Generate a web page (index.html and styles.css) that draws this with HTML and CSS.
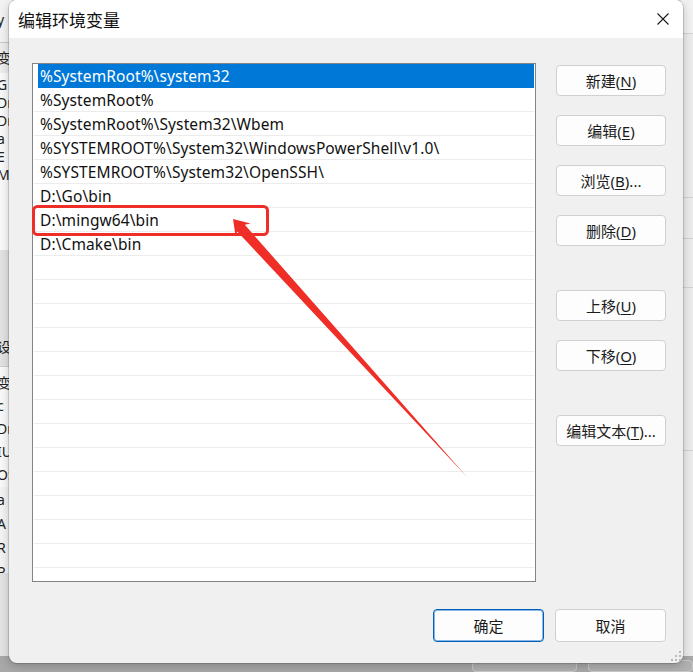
FILE: index.html
```html
<!DOCTYPE html>
<html lang="zh-CN">
<head>
<meta charset="utf-8">
<title>编辑环境变量</title>
<link rel="stylesheet" href="styles.css">
</head>
<body>
<div class="desk">
  <div class="bgwin">
    <div class="bg-row">
      <div class="bg-left">
        <div class="bg-top"><span class="frag">y |</span></div>
        <div class="bg-sec"><span class="frag">变</span></div>
        <div class="bg-list">
          <span class="frag">G</span><span class="frag">Dr</span><span class="frag">Dr</span><span class="frag">a</span><span class="frag">E</span><span class="frag">M</span>
        </div>
        <div class="bg-gap"><span class="frag">设</span></div>
        <div class="bg-list2">
          <span class="frag">变</span><span class="frag">c</span><span class="frag">Dr</span><span class="frag">IU</span><span class="frag">OS</span>
        </div>
        <div class="bg-list3">
          <span class="frag">a</span><span class="frag">A</span><span class="frag">R</span><span class="frag">P</span>
        </div>
        <div class="bg-rest"></div>
      </div>
      <div class="bg-mid"></div>
      <div class="bg-right">
        <div class="br-a"></div>
        <div class="br-b"></div>
        <div class="br-c"></div>
        <div class="br-d"></div>
        <div class="br-e"></div>
        <div class="br-f"></div>
      </div>
    </div>
    <div class="bg-bottom">
      <div class="bg-btn"></div>
      <div class="bg-btn"></div>
    </div>
  </div>

  <div class="dialog">
    <div class="titlebar">
      <div class="title">编辑环境变量</div>
      <div class="close">
        <svg width="12" height="12" viewBox="0 0 12 12"><path d="M0.5 0.5 L11.5 11.5 M11.5 0.5 L0.5 11.5" stroke="#1a1a1a" stroke-width="1.1" fill="none"/></svg>
      </div>
    </div>
    <div class="content">
      <div class="main">
        <div class="list">
          <div class="row sel"><div class="cell">%SystemRoot%\system32</div></div>
          <div class="row"><div class="cell">%SystemRoot%</div></div>
          <div class="row"><div class="cell">%SystemRoot%\System32\Wbem</div></div>
          <div class="row"><div class="cell">%SYSTEMROOT%\System32\WindowsPowerShell\v1.0\</div></div>
          <div class="row"><div class="cell">%SYSTEMROOT%\System32\OpenSSH\</div></div>
          <div class="row"><div class="cell">D:\Go\bin</div></div>
          <div class="row"><div class="cell">D:\mingw64\bin</div></div>
          <div class="row"><div class="cell">D:\Cmake\bin</div></div>
          <div class="row"><div class="cell"></div></div>
          <div class="row"><div class="cell"></div></div>
          <div class="row"><div class="cell"></div></div>
          <div class="row"><div class="cell"></div></div>
          <div class="row"><div class="cell"></div></div>
          <div class="row"><div class="cell"></div></div>
          <div class="row"><div class="cell"></div></div>
          <div class="row"><div class="cell"></div></div>
          <div class="row"><div class="cell"></div></div>
          <div class="row"><div class="cell"></div></div>
          <div class="row"><div class="cell"></div></div>
          <div class="row"><div class="cell"></div></div>
          <div class="row"><div class="cell"></div></div>
          <div class="row"><div class="cell"></div></div>
        </div>
        <div class="side">
          <div class="btn">新建(<u>N</u>)</div>
          <div class="btn gap-s">编辑(<u>E</u>)</div>
          <div class="btn gap-s">浏览(<u>B</u>)...</div>
          <div class="btn gap-s">删除(<u>D</u>)</div>
          <div class="btn gap-l">上移(<u>U</u>)</div>
          <div class="btn gap-s">下移(<u>O</u>)</div>
          <div class="btn gap-l">编辑文本(<u>T</u>)...</div>
        </div>
      </div>
      <div class="footer">
        <div class="btn wide primary">确定</div>
        <div class="btn wide">取消</div>
      </div>
    </div>
    <svg class="grip" width="12" height="12" viewBox="0 0 12 12">
      <rect x="9" y="1" width="2" height="2" fill="#b9b9b9"/>
      <rect x="5" y="5" width="2" height="2" fill="#b9b9b9"/>
      <rect x="9" y="5" width="2" height="2" fill="#b9b9b9"/>
      <rect x="1" y="9" width="2" height="2" fill="#b9b9b9"/>
      <rect x="5" y="9" width="2" height="2" fill="#b9b9b9"/>
      <rect x="9" y="9" width="2" height="2" fill="#b9b9b9"/>
    </svg>
  </div>

  <svg class="annot" width="693" height="672" viewBox="0 0 693 672">
    <rect x="33.5" y="206.5" width="234" height="28" rx="4" ry="4" fill="none" stroke="#ef2f27" stroke-width="3"/>
    <polygon points="233,219 250.5,223.4 244.8,224.8 467,477 237.2,231.5 235.7,236.8" fill="#ef2f27"/>
  </svg>
</div>
</body>
</html>
```
FILE: styles.css
```css
html, body {
  margin: 0;
  padding: 0;
}

body {
  width: 693px;
  height: 672px;
  overflow: hidden;
  font-family: "Noto Sans", "Noto Sans CJK SC", sans-serif;
}

.desk {
  position: relative;
  width: 693px;
  height: 672px;
  overflow: hidden;
  background: #e6e6e6;
}

/* background window (behind the dialog) */
.bgwin {
  position: absolute;
  left: 0;
  top: 0;
  width: 693px;
  height: 672px;
  display: flex;
  flex-direction: column;
}

.bg-row {
  height: 663px;
  display: flex;
}

.bg-left {
  width: 12px;
  display: flex;
  flex-direction: column;
  font-family: "Noto Sans", "Noto Sans CJK SC", sans-serif;
  font-size: 14px;
  color: #222;
  overflow: hidden;
}

.frag {
  display: block;
  white-space: nowrap;
  margin-left: -3px;
}

.bg-top {
  height: 43px;
  background: #f2f2f2;
  border-bottom: 1px solid #c8c8c8;
  box-sizing: border-box;
  padding-top: 12px;
  line-height: 16px;
}

.bg-sec {
  height: 30px;
  background: #ececec;
  line-height: 30px;
  padding-top: 0;
}

.bg-list {
  height: 177px;
  background: #f9f9f9;
  line-height: 18px;
  padding-top: 3px;
  box-sizing: border-box;
}

.bg-gap {
  height: 117px;
  background: #e2e2e2;
  box-sizing: border-box;
  padding-top: 88px;
  line-height: 18px;
  border-bottom: 1px solid #cfcfcf;
}

.bg-list2 {
  height: 120px;
  background: #f9f9f9;
  line-height: 23px;
  padding-top: 4px;
  box-sizing: border-box;
}

.bg-list3 {
  height: 86px;
  background: #f3f3f3;
  line-height: 24px;
  padding-top: 1px;
  box-sizing: border-box;
}

.bg-rest {
  flex: 1;
  background: #e3e3e3;
}

.bg-mid {
  flex: 1;
  background: #e6e6e6;
}

.bg-right {
  width: 12px;
  display: flex;
  flex-direction: column;
  background: #ebebeb;
}

.br-a { height: 33px; background: #f1f1f1; border-bottom: 1px solid #d2d2d2; }
.br-b { height: 163px; border-bottom: 1px solid #d2d2d2; }
.br-c { height: 40px; border-bottom: 1px solid #d2d2d2; }
.br-d { height: 48px; border-bottom: 1px solid #d2d2d2; }
.br-e { height: 162px; border-bottom: 1px solid #d2d2d2; }
.br-f { flex: 1; }

.bg-bottom {
  flex: 1;
  background: #a8a8a8;
  display: flex;
  gap: 11px;
  padding-left: 472px;
  padding-top: 4px;
}

.bg-btn {
  width: 110px;
  height: 12px;
  box-sizing: border-box;
  border: 1px solid #c9c9c9;
  border-radius: 4px;
  background: #b1b1b1;
}

/* dialog window */
.dialog {
  position: absolute;
  left: 9px;
  top: 0;
  width: 674px;
  height: 663px;
  background: #f0f0f0;
  border-radius: 8px;
  overflow: hidden;
  display: flex;
  flex-direction: column;
  box-shadow: 0 0 0 1px rgba(0, 0, 0, 0.14), 0 3px 10px rgba(0, 0, 0, 0.22);
}

.titlebar {
  height: 38px;
  flex: none;
  background: #ffffff;
  display: flex;
  align-items: center;
  justify-content: space-between;
  padding-left: 9px;
}

.title {
  font-family: "Noto Sans CJK SC", sans-serif;
  font-size: 17px;
  color: #111;
  line-height: 20px;
  padding-top: 1px;
}

.close {
  width: 40px;
  height: 38px;
  display: flex;
  align-items: center;
  justify-content: center;
}

.content {
  flex: 1;
  padding: 25px 17px 0 23px;
  display: flex;
  flex-direction: column;
}

.main {
  display: flex;
  gap: 20px;
}

.list {
  width: 504px;
  height: 519px;
  box-sizing: border-box;
  border: 1px solid #838383;
  background: #ffffff;
  padding: 0 1px;
  overflow: hidden;
}

.row {
  height: 24px;
  box-sizing: border-box;
  border-bottom: 1px solid #ececec;
}

.row.sel {
  border-bottom-color: transparent;
}

.cell {
  height: 24px;
  margin-left: 4px;
  padding-left: 2px;
  font-family: "Noto Sans", "Noto Sans CJK SC", sans-serif;
  font-size: 15.5px;
  letter-spacing: 0.1px;
  line-height: 24px;
  color: #111;
  white-space: nowrap;
}

.row.sel .cell {
  background: #0078d7;
  color: #ffffff;
}

.side {
  width: 110px;
  display: flex;
  flex-direction: column;
  padding-top: 2px;
}

.btn {
  height: 31px;
  box-sizing: border-box;
  border: 1px solid #d0d0d0;
  border-radius: 4px;
  background: #fdfdfd;
  display: flex;
  align-items: center;
  justify-content: center;
  font-family: "Noto Sans", "Noto Sans CJK SC", sans-serif;
  font-size: 15px;
  color: #1b1b1b;
  white-space: nowrap;
}

.btn u {
  text-underline-offset: 2px;
  text-decoration-thickness: 1px;
}

.gap-s { margin-top: 19px; }
.gap-l { margin-top: 44px; }

.footer {
  display: flex;
  justify-content: flex-end;
  gap: 11px;
  margin-top: 27px;
}

.btn.wide {
  width: 111px;
  height: 33px;
}

.btn.primary {
  border: 1px solid #005fb8;
  box-shadow: inset 0 0 0 1px #8ab8e6;
}

.grip {
  position: absolute;
  right: 1px;
  bottom: 1px;
}

.annot {
  position: absolute;
  left: 0;
  top: 0;
}
```
